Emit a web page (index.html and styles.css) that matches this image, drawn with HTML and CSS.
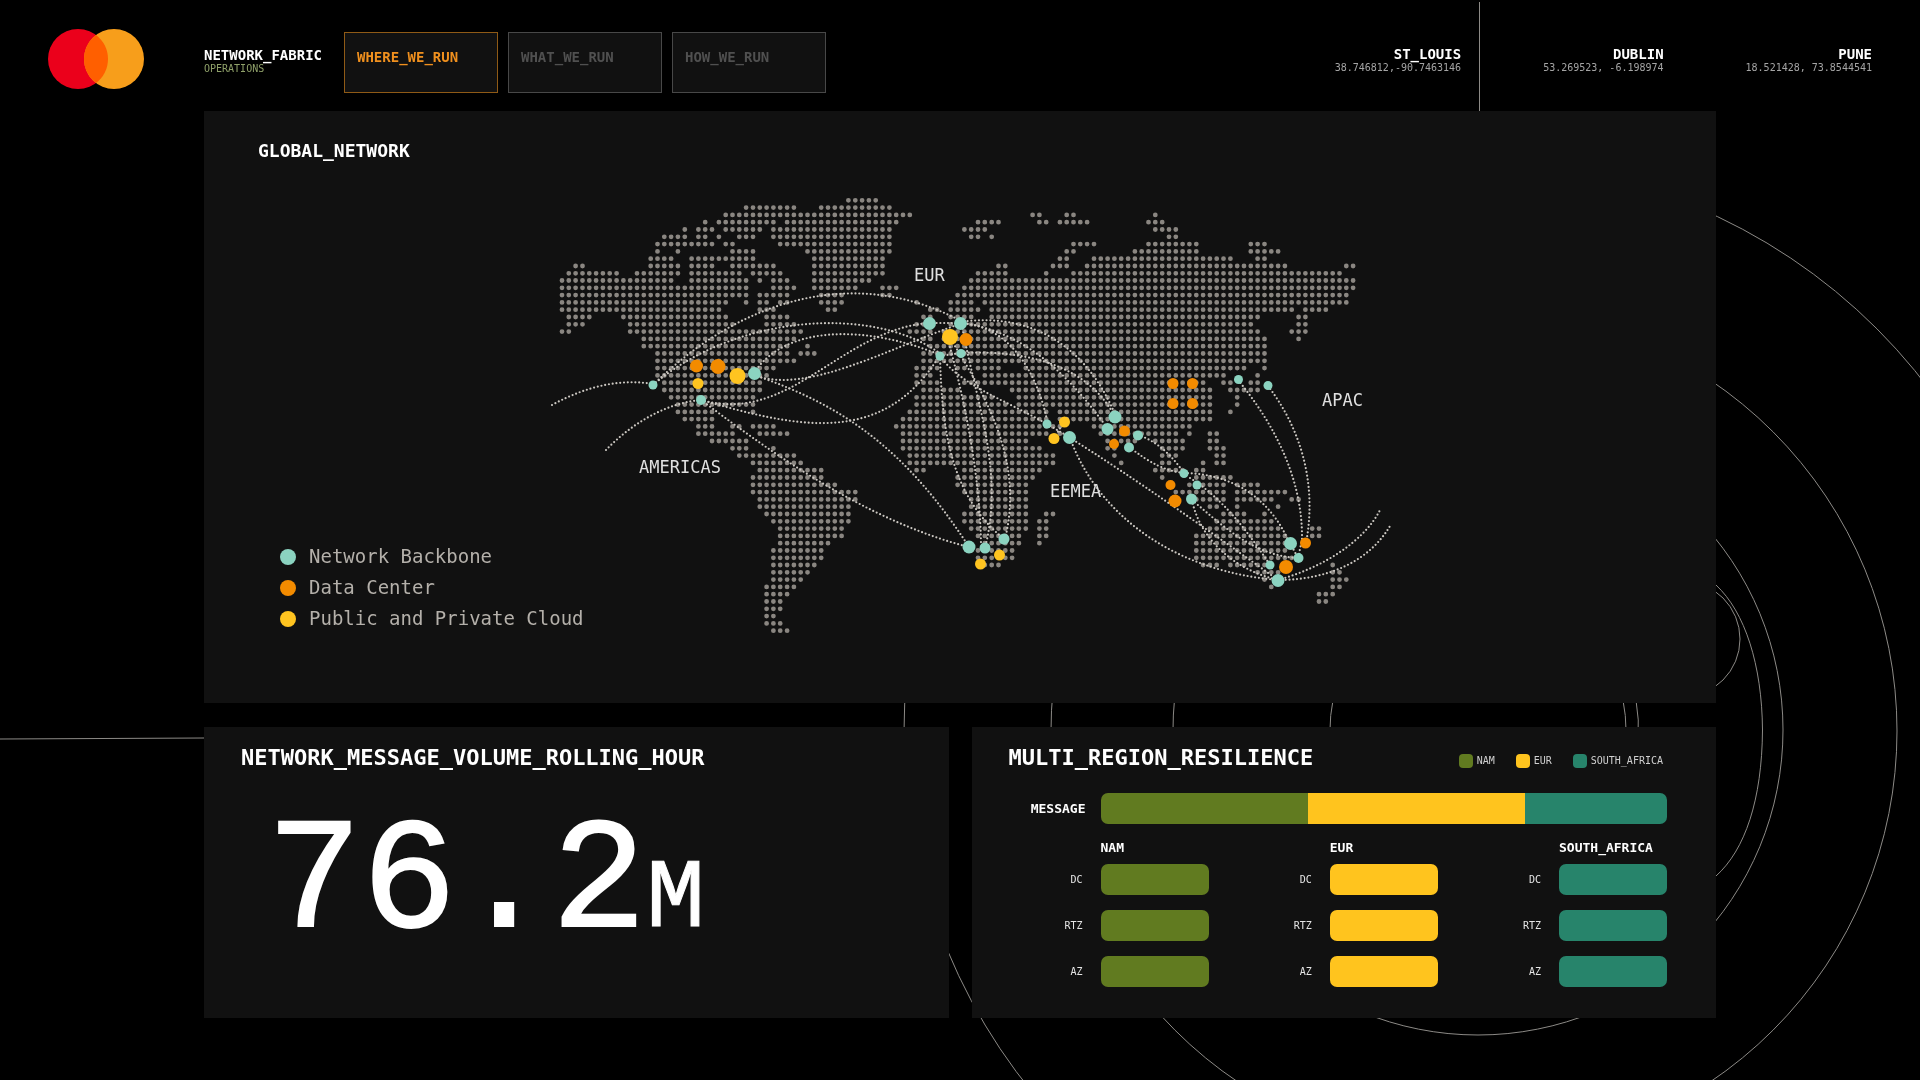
FILE: index.html
```html
<!DOCTYPE html>
<html lang="en">
<head>
<meta charset="utf-8">
<title>Network Fabric Operations</title>
<link rel="stylesheet" href="styles.css">
</head>
<body>
<svg class="backdrop" viewBox="0 0 1920 1080" preserveAspectRatio="xMidYMid slice" aria-hidden="true">
  <path d="M0 739L204 738M1479.5 2V111"/>
  <circle cx="1474" cy="732" r="570"/>
  <circle cx="1474" cy="731" r="423"/>
  <circle cx="1478" cy="730" r="305"/>
  <circle cx="1478" cy="730" r="148"/>
  <path d="M1636 700A160 160 0 0 1 1638 740"/>
  <path d="M1716 585C1745 612 1762 665 1762.500 730C1762 800 1745 850 1716 876"/>
  <circle cx="1682" cy="639" r="58"/>
</svg>

<header class="topbar">
  <svg class="logo" viewBox="0 0 96 60" role="img" aria-label="Logo">
    <circle cx="30" cy="30" r="30" fill="#eb001b"/>
    <circle cx="66" cy="30" r="30" fill="#f79e1b"/>
    <path d="M48 6A30 30 0 0 1 48 54A30 30 0 0 1 48 6Z" fill="#ff5f00"/>
  </svg>
  <div class="brand">
    <h1 class="brand-name">NETWORK_FABRIC</h1>
    <p class="brand-sub">OPERATIONS</p>
  </div>
  <nav class="tabs">
    <button type="button" class="tab tab-active">WHERE_WE_RUN</button>
    <button type="button" class="tab">WHAT_WE_RUN</button>
    <button type="button" class="tab">HOW_WE_RUN</button>
  </nav>
  <ul class="cities">
    <li><strong>ST_LOUIS</strong><span>38.746812,-90.7463146</span></li>
    <li><strong>DUBLIN</strong><span>53.269523, -6.198974</span></li>
    <li><strong>PUNE</strong><span>18.521428, 73.8544541</span></li>
  </ul>
</header>

<main class="board">
  <section class="panel network">
    <svg class="map" viewBox="204 111 1512 592" role="img" aria-label="World map of network sites">
      <path id="land" class="land"/>
      <g class="routes">
        <path d="M552 405Q605 376 653 384"/>
        <path d="M606 450C630 425 665 403 701 400"/>
        <path d="M653 385C745 295 858 268 957 319"/>
        <path d="M653 385C735 315 870 305 938 352"/>
        <path d="M754 373C785 325 865 325 938 354"/>
        <path d="M754 375C805 395 885 350 957 325"/>
        <path d="M754 375C842 405 905 448 969 547"/>
        <path d="M701 400C790 425 840 330 929 323"/>
        <path d="M701 400C790 425 880 450 938 358"/>
        <path d="M701 400C755 440 860 520 969 547"/>
        <path d="M929 323H960"/>
        <path d="M940 356C942 430 950 495 1004 539"/>
        <path d="M948 340C962 390 980 470 981 545"/>
        <path d="M962 325C975 400 1005 470 985 548"/>
        <path d="M953 343C995 410 1022 470 1005 539"/>
        <path d="M940 356C960 385 1005 400 1045 423"/>
        <path d="M940 356L961 353"/>
        <path d="M960 323C1005 325 1035 365 1047 420"/>
        <path d="M960 322C1030 312 1085 345 1114 412"/>
        <path d="M960 323C1020 330 1065 370 1105 425"/>
        <path d="M961 353C1020 350 1085 362 1114 415"/>
        <path d="M1047 424L1069 437M1064 422L1054 438"/>
        <path d="M1070 438C1100 520 1180 572 1278 580"/>
        <path d="M1070 438C1130 475 1215 535 1278 580"/>
        <path d="M1138 435C1160 442 1175 460 1184 473"/>
        <path d="M1129 447C1150 463 1165 471 1184 473"/>
        <path d="M1184 473C1235 474 1270 500 1288 540"/>
        <path d="M1190 478C1225 500 1250 535 1270 565"/>
        <path d="M1192 500C1225 528 1255 556 1298 558"/>
        <path d="M1192 500C1200 540 1235 570 1278 580"/>
        <path d="M1238 380C1275 425 1303 480 1302 540L1298 558"/>
        <path d="M1268 386C1298 425 1318 480 1306 543"/>
        <path d="M1290 543L1298 558"/>
        <path d="M1278 580C1325 567 1365 540 1380 510"/>
        <path d="M1278 580C1330 580 1370 560 1390 526"/>
      </g>
      <g class="backbone">
        <circle cx="653" cy="385" r="4.500"/><circle cx="754.500" cy="373.500" r="6.500"/><circle cx="701" cy="400" r="5"/>
        <circle cx="929.500" cy="323.500" r="6.500"/><circle cx="960.500" cy="323.500" r="6.500"/><circle cx="940" cy="356" r="4.500"/>
        <circle cx="961" cy="353.500" r="4.500"/><circle cx="1047" cy="424" r="4.500"/><circle cx="1069.500" cy="437.500" r="6.500"/>
        <circle cx="1115" cy="417" r="6.500"/><circle cx="1107.500" cy="429" r="6"/><circle cx="1138" cy="435.500" r="5"/>
        <circle cx="1129" cy="447.500" r="5"/><circle cx="1184" cy="473.500" r="4.500"/><circle cx="1197" cy="485" r="4.500"/>
        <circle cx="1191.500" cy="499" r="5.500"/><circle cx="1238.500" cy="379.500" r="4.500"/><circle cx="1268" cy="385.500" r="4.500"/>
        <circle cx="969" cy="547" r="6.500"/><circle cx="985" cy="548" r="5.500"/><circle cx="1004" cy="539" r="5.500"/>
        <circle cx="1290.500" cy="543.500" r="6.500"/><circle cx="1298.500" cy="558" r="5"/><circle cx="1270" cy="565" r="4.500"/>
        <circle cx="1278" cy="580.500" r="6.500"/>
      </g>
      <g class="datacenter">
        <circle cx="696.500" cy="366" r="6.500"/><circle cx="718" cy="366.500" r="7.500"/><circle cx="966" cy="339.500" r="6.500"/>
        <circle cx="1173" cy="383.500" r="5.500"/><circle cx="1192.500" cy="383.500" r="5.500"/><circle cx="1173" cy="403.500" r="5.500"/>
        <circle cx="1192.500" cy="403.500" r="5.500"/><circle cx="1124.500" cy="431" r="5.500"/><circle cx="1114" cy="444" r="5"/>
        <circle cx="1170.500" cy="485" r="5"/><circle cx="1175" cy="501" r="6.500"/><circle cx="1305.500" cy="543" r="5.500"/>
        <circle cx="1286" cy="567" r="7"/>
      </g>
      <g class="cloud">
        <circle cx="737.500" cy="376" r="8"/><circle cx="698" cy="383.500" r="5.500"/><circle cx="950" cy="337" r="8"/>
        <circle cx="1064.500" cy="422" r="5.500"/><circle cx="1054" cy="438.500" r="5.500"/><circle cx="999.500" cy="555" r="5.500"/>
        <circle cx="980.500" cy="564" r="5.500"/>
      </g>
      <g class="region-label">
        <text x="914" y="281">EUR</text>
        <text x="639" y="473">AMERICAS</text>
        <text x="1050" y="497">EEMEA</text>
        <text x="1322" y="406">APAC</text>
      </g>
    </svg>
    <div class="network-info">
      <h2 class="network-title">GLOBAL_NETWORK</h2>
      <ul class="network-legend">
        <li class="backbone">Network Backbone</li>
        <li class="datacenter">Data Center</li>
        <li class="cloud">Public and Private Cloud</li>
      </ul>
    </div>
  </section>

  <div class="lower">
    <section class="panel volume">
      <h2 class="panel-title">NETWORK_MESSAGE_VOLUME_ROLLING_HOUR</h2>
      <p class="figure">76.2<span class="figure-unit">M</span></p>
    </section>

    <section class="panel resilience">
      <div class="resilience-head">
        <h2 class="panel-title">MULTI_REGION_RESILIENCE</h2>
        <ul class="keys">
          <li><i class="swatch nam"></i>NAM</li>
          <li><i class="swatch eur"></i>EUR</li>
          <li><i class="swatch africa"></i>SOUTH_AFRICA</li>
        </ul>
      </div>
      <div class="message">
        <h3 class="sub-title message-label">MESSAGE</h3>
        <div class="split">
          <span class="nam" style="width:36.6%"></span>
          <span class="eur" style="width:38.4%"></span>
          <span class="africa" style="width:25%"></span>
        </div>
      </div>
      <div class="groups">
        <div class="group">
          <h3 class="sub-title">NAM</h3>
          <div class="tiers">
            <span class="tier">DC</span><span class="bar nam"></span>
            <span class="tier">RTZ</span><span class="bar nam"></span>
            <span class="tier">AZ</span><span class="bar nam"></span>
          </div>
        </div>
        <div class="group">
          <h3 class="sub-title">EUR</h3>
          <div class="tiers">
            <span class="tier">DC</span><span class="bar eur"></span>
            <span class="tier">RTZ</span><span class="bar eur"></span>
            <span class="tier">AZ</span><span class="bar eur"></span>
          </div>
        </div>
        <div class="group">
          <h3 class="sub-title">SOUTH_AFRICA</h3>
          <div class="tiers">
            <span class="tier">DC</span><span class="bar africa"></span>
            <span class="tier">RTZ</span><span class="bar africa"></span>
            <span class="tier">AZ</span><span class="bar africa"></span>
          </div>
        </div>
      </div>
    </section>
  </div>
</main>
<script src="map.js"></script>
</body>
</html>
```
FILE: styles.css
```css
* { box-sizing: border-box; margin: 0; padding: 0; }

body {
  min-height: 100vh;
  background: #000;
  color: #fff;
  font-family: "DejaVu Sans Mono", "Liberation Mono", monospace;
}

ul { list-style: none; }

.backdrop {
  position: fixed;
  inset: 0;
  z-index: -1;
  width: 100%;
  height: 100%;
  fill: none;
  stroke: #8c8a86;
  stroke-width: 1;
}

.topbar {
  display: flex;
  align-items: flex-start;
  padding: 29px 48px 18px;
}
.logo { flex: none; width: 96px; height: 60px; margin-right: 60px; }
.brand { flex: none; width: 140px; padding-top: 18px; }
.brand-name { font-size: 14px; line-height: 16px; }
.brand-sub { font-size: 10px; line-height: 12px; color: #8fa069; }

.tabs { display: flex; gap: 10px; padding-top: 3px; }
.tab {
  width: 154px;
  height: 61px;
  padding: 16px 12px 27px;
  border: 1px solid #484848;
  background: #111;
  color: #505050;
  font: bold 14px/16px "DejaVu Sans Mono", "Liberation Mono", monospace;
  text-align: left;
}
.tab-active { border-color: #8f5a16; color: #f0901e; }

.cities {
  display: flex;
  gap: 82px;
  margin-left: auto;
  padding-top: 17px;
  text-align: right;
}
.cities strong { display: block; font-size: 14px; line-height: 16px; }
.cities span { display: block; font-size: 10px; line-height: 12px; color: #a5a5a5; }

.board {
  display: grid;
  gap: 24px;
  padding: 0 204px 60px;
}
.panel { background: #111; }

.network { display: grid; }
.network > * { grid-area: 1 / 1; }
.map { display: block; width: 100%; height: auto; }
.land {
  fill: none;
  stroke: #8a8681;
  stroke-width: 4.8;
  stroke-linecap: round;
}
.routes {
  fill: none;
  stroke: #cbc7c1;
  stroke-width: 2.2;
  stroke-linecap: round;
  stroke-dasharray: 0 3.8;
}
.region-label { fill: #e0e0e0; font-size: 17px; }

.network-info {
  display: flex;
  flex-direction: column;
  justify-content: space-between;
  justify-self: start;
  padding: 28px 54px 69px;
}
.network-title { font-size: 18px; line-height: 24px; }
.network-legend { padding-left: 22px; }
.network-legend li {
  display: flex;
  align-items: center;
  gap: 13px;
  font-size: 19px;
  line-height: 31px;
  color: #b4b0aa;
}
.network-legend li::before {
  content: "";
  width: 16px;
  height: 16px;
  border-radius: 50%;
  background: var(--kind);
}
.backbone { --kind: #8bd3c0; fill: var(--kind); }
.datacenter { --kind: #f38b00; fill: var(--kind); }
.cloud { --kind: #ffc420; fill: var(--kind); }

.lower {
  display: grid;
  grid-template-columns: 1fr 1fr;
  gap: 23px;
}
.panel-title { font-size: 22px; line-height: 24px; }
.sub-title { font-size: 13px; line-height: 16px; }

.volume { padding: 19px 37px; }
.figure {
  padding-left: 26px;
  margin-top: 36px;
  font-family: "Liberation Mono", monospace;
  font-size: 158px;
  line-height: 156px;
  -webkit-text-stroke: 2px #fff;
}
.figure-unit { font-size: 98px; line-height: 98px; -webkit-text-stroke-width: 1px; }

.resilience { padding: 19px 49px 31px 37px; }
.resilience-head {
  display: flex;
  align-items: center;
  justify-content: space-between;
}
.keys { display: flex; gap: 21px; padding: 6px 4px 0 0; }
.keys li {
  display: flex;
  align-items: center;
  gap: 4px;
  font-size: 10px;
  line-height: 14px;
  color: #d0d0d0;
}
.swatch { width: 14px; height: 14px; border-radius: 4px; }

.nam { background: #617b20; }
.eur { background: #ffc41e; }
.africa { background: #27846b; }

.message {
  display: flex;
  align-items: center;
  gap: 15px;
  margin-top: 23px;
}
.message-label { width: 77px; text-align: right; }
.split {
  display: flex;
  flex: 1;
  height: 31px;
  overflow: hidden;
  border-radius: 7px;
}

.groups {
  display: flex;
  justify-content: space-between;
  margin-top: 16px;
  padding-left: 38px;
}
.group .sub-title { padding-left: 54px; }
.tiers {
  display: grid;
  grid-template-columns: 36px 108px;
  align-items: center;
  gap: 15px 18px;
  margin-top: 8px;
}
.tier { font-size: 10px; line-height: 12px; text-align: right; color: #e6e6e6; }
.bar { height: 31px; border-radius: 7px; }
```
FILE: map.js
```js
// Land mask of the dotted map: one string per row, column ranges from west to east.
const rows = [
  "42-46",
  "27-34 38-48",
  "24-51 69-70 74-75 87",
  "21 23-31 33-49 61-64 70-71 73-77 86-88",
  "18 20-22 24-29 31-48 59-62 87-90",
  "15-18 20-21 23 26-28 31-48 60-61 63 89-90",
  "14-22 24-25 32-48 75-78 86-93 101-103",
  "14 17 25-28 36-48 74-75 84-93 101-105",
  "13-16 19-28 37-47 73-74 78-98 102-103",
  "2-3 13-17 19-22 25-31 37-47 64-65 72-74 77-106 115-116",
  "1-8 11-17 19-26 28-32 37-47 61-65 71 75-114",
  "0-16 19-27 29 31-33 37-45 60-116",
  "0-27 31-34 37-43 47-49 59-116",
  "0-27 29-33 38-41 47-48 58-115",
  "0-24 27 29-30 32-33 38-41 52 57-60 62-115",
  "0-23 29-31 39-40 54-55 57-61 63-107 109-112",
  "1-4 9-24 30-33 53-54 57-60 63-102 108-109",
  "1-3 10-25 30-34 52-54 57-58 60-101 108-109",
  "0-1 10-35 51-54 56-102 107-109",
  "12-34 53-54 56-103 108",
  "12-33 36 54-103",
  "14-33 35-37 53-103",
  "14-34 53-103",
  "14-31 52-55 58-59 61-64 68-100 103",
  "14-30 52-54 62-97 102",
  "15-29 52-55 59-94 97-98 101-102",
  "15-29 53-58 66-95 98-102",
  "16-28 52-63 67-95 99",
  "17-28 52-65 67-95 99",
  "17-22 28 51-71 73-95 98",
  "18-22 50-71 73-95",
  "20-22 25-26 28-31 49-73 78-92",
  "20-25 29-33 50-71 73 79-90 92 95-96",
  "22-27 50-68 80-84 87-91 95-96",
  "25-27 31 50-70 80-81 88-91 95-97",
  "26-34 51-72 81 88-90 96-97",
  "28-35 51-72 82 88-89 94 96-97",
  "29-38 52-53 59-70 87-91 93-94",
  "28-38 58-69 88 93-98",
  "28-40 58-68 92 94-97 99-102",
  "28-43 59-68 90-97 99-106",
  "29-43 60-68 92-97 99-104 107-108",
  "29-42 60-68 95-96 99 105",
  "30-42 59-68 71-72 97-100 103",
  "31-42 59-68 70-71 96-104",
  "32-41 60-68 70-71 95-105 110-111",
  "32-41 61-67 70-71 93-106 110-111",
  "32-39 62-67 70 93-107",
  "31-38 60-66 93-106",
  "31-38 61-66 93-107",
  "31-37 62-64 94-96 98-104 106 113",
  "31-36 102-105 113-114",
  "31-35 103 113-115",
  "30-34 104 113-114",
  "30-33 111-113",
  "30-32 111-112",
  "30-32",
  "30-31",
  "30-32",
  "31-33"
];

const origin = { x: 562, y: 200.3 };
const pitch = { x: 6.82, y: 7.295 };

const dots = rows.flatMap((row, r) => row.split(" ").flatMap(range => {
  const [from, to = from] = range.split("-").map(Number);
  const run = [];
  for (let c = from; c <= to; c++) {
    run.push(`M${(origin.x + c * pitch.x).toFixed(1)} ${(origin.y + r * pitch.y).toFixed(1)}h0`);
  }
  return run;
}));

document.getElementById("land").setAttribute("d", dots.join(""));
```
